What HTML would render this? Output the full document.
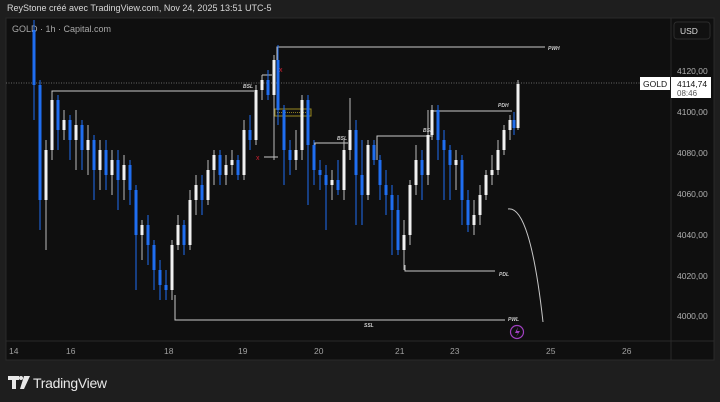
<!DOCTYPE html>
<html><head><meta charset="utf-8"><style>
html,body{margin:0;padding:0;background:#1e1e1e;width:720px;height:402px;overflow:hidden;font-family:"Liberation Sans",sans-serif}
.hdr{position:absolute;left:7px;top:3px;font-size:9px;color:#d8d8d8}
</style></head><body>
<div class="hdr">ReyStone créé avec TradingView.com, Nov 24, 2025 13:51 UTC-5</div>
<svg width="720" height="402" style="position:absolute;left:0;top:0">
<rect x="6" y="18" width="708" height="342" fill="#0f0f0f" stroke="#2a2a2a"/>
<line x1="671" y1="18" x2="671" y2="360" stroke="#2a2a2a"/>
<line x1="6" y1="341" x2="714" y2="341" stroke="#2a2a2a"/>
<text x="12" y="32" font-size="9" fill="#a8a8a8">GOLD · 1h · Capital.com</text>
<rect x="674" y="22" width="36" height="17" rx="3" fill="#111" stroke="#2c2c2c"/>
<text x="680" y="34" font-size="8.5" fill="#ddd">USD</text>
<g font-size="8.5" fill="#b0b0b0">
<text x="677" y="74">4120,00</text><text x="677" y="115">4100,00</text><text x="677" y="156">4080,00</text><text x="677" y="197">4060,00</text><text x="677" y="238">4040,00</text><text x="677" y="279">4020,00</text><text x="677" y="319">4000,00</text>
</g>
<g font-size="8.5" fill="#a0a0a0">
<text x="9" y="354">14</text><text x="66" y="354">16</text><text x="164" y="354">18</text><text x="238" y="354">19</text><text x="314" y="354">20</text><text x="395" y="354">21</text><text x="450" y="354">23</text><text x="546" y="354">25</text><text x="622" y="354">26</text>
</g>
<line x1="6" y1="83" x2="671" y2="83" stroke="#666" stroke-dasharray="1,1.5"/>
<rect x="640" y="77" width="30" height="13" fill="#fff"/>
<text x="643" y="87" font-size="8.5" fill="#111">GOLD</text>
<rect x="671" y="77" width="40" height="21" fill="#fff"/>
<text x="677" y="87" font-size="8.5" fill="#111">4114,74</text>
<text x="677" y="96" font-size="8" fill="#555">08:46</text>
<g stroke="#c8c8c8" stroke-width="1" fill="none">
<path d="M277,69V47H545"/>
<path d="M52,120V91H254"/>
<path d="M262,75H272"/>
<path d="M175,295V320H505"/>
<path d="M432,118V111H512"/>
<path d="M405,265V271H495"/>
<path d="M315,165V143H348"/>
<path d="M377,160V136H433"/>
<path d="M264,157H278"/>
<path d="M508,209Q530,205 543,322"/>
</g>
<rect x="275" y="109" width="36" height="7" fill="none" stroke="#9a8a20"/>
<line x1="277" y1="112.5" x2="309" y2="112.5" stroke="#8a7a20" stroke-dasharray="1,1"/>
<g font-size="5" font-weight="bold" fill="#ccc" font-style="italic">
<text x="548" y="50">PWH</text><text x="243" y="88">BSL</text><text x="337" y="140">BSL</text><text x="423" y="132">BSL</text><text x="498" y="107">PDH</text><text x="499" y="276">PDL</text><text x="364" y="327">SSL</text><text x="508" y="321">PWL</text>
</g>
<text x="279" y="72" font-size="7" fill="#d02030">x</text>
<text x="256" y="160" font-size="7" fill="#d02030">x</text>
<circle cx="517" cy="332" r="6.5" fill="none" stroke="#a040c0" stroke-width="1.2"/>
<path d="M518,327L515,333H518L516,337L520,331H517Z" fill="#a040c0"/>
<g id="c">
<!-- candles: wick then body -->
<g stroke-width="1">
</g>
</g>
<g>
<path stroke="#1f6ef0" d="M34,20V120M40,80V230M58,95V150M70,115V160M82,120V170M94,135V200M106,140V190M118,150V210M130,160V205M136,185V290M148,215V265M154,240V290M160,260V300M166,270V300M184,220V255M202,175V215M220,150V185M238,155V180M250,115V150M268,70V100M278,45V125M284,105V185M290,140V175M308,95V205M314,140V185M320,160V190M326,165V230M338,160V195M356,120V225M362,140V225M374,140V165M380,155V200M386,170V215M392,185V255M398,195V255M422,150V200M438,105V160M444,130V200M450,145V200M462,155V225M468,190V232M514,112V135"/>
<path stroke="#bbb" d="M46,140V250M52,92V160M64,110V140M76,110V170M88,125V175M100,140V190M112,150V195M124,155V200M142,220V260M172,240V300M178,215V250M190,190V250M196,175V215M208,160V205M214,150V185M226,155V185M232,150V175M244,120V180M256,85V145M262,75V100M274,55V160M296,130V170M302,95V160M332,170V200M344,140V200M350,98V160M368,140V200M404,220V270M410,180V245M416,145V195M428,110V185M432,105V140M456,150V190M474,200V235M480,185V225M486,170V200M492,155V185M498,140V175M504,125V155M510,115V140M518,80V130"/>
<g fill="#1f6ef0">
<rect x="32.5" y="30" width="3" height="55"/><rect x="38.5" y="85" width="3" height="115"/><rect x="56.5" y="100" width="3" height="30"/><rect x="68.5" y="120" width="3" height="20"/><rect x="80.5" y="125" width="3" height="25"/><rect x="92.5" y="140" width="3" height="30"/><rect x="104.5" y="150" width="3" height="25"/><rect x="116.5" y="160" width="3" height="20"/><rect x="128.5" y="165" width="3" height="25"/><rect x="134.5" y="190" width="3" height="45"/><rect x="146.5" y="225" width="3" height="20"/><rect x="152.5" y="245" width="3" height="25"/><rect x="158.5" y="270" width="3" height="15"/><rect x="164.5" y="285" width="3" height="5"/><rect x="182.5" y="225" width="3" height="20"/><rect x="200.5" y="185" width="3" height="15"/><rect x="218.5" y="155" width="3" height="20"/><rect x="236.5" y="160" width="3" height="15"/><rect x="248.5" y="130" width="3" height="10"/><rect x="266.5" y="80" width="3" height="15"/><rect x="276.5" y="60" width="3" height="50"/><rect x="282.5" y="110" width="3" height="40"/><rect x="288.5" y="150" width="3" height="10"/><rect x="306.5" y="100" width="3" height="45"/><rect x="312.5" y="145" width="3" height="25"/><rect x="318.5" y="170" width="3" height="5"/><rect x="324.5" y="175" width="3" height="10"/><rect x="336.5" y="180" width="3" height="10"/><rect x="354.5" y="130" width="3" height="45"/><rect x="360.5" y="175" width="3" height="20"/><rect x="372.5" y="145" width="3" height="15"/><rect x="378.5" y="160" width="3" height="25"/><rect x="384.5" y="185" width="3" height="10"/><rect x="390.5" y="195" width="3" height="15"/><rect x="396.5" y="210" width="3" height="40"/><rect x="420.5" y="160" width="3" height="15"/><rect x="436.5" y="110" width="3" height="30"/><rect x="442.5" y="140" width="3" height="10"/><rect x="448.5" y="150" width="3" height="15"/><rect x="460.5" y="160" width="3" height="40"/><rect x="466.5" y="200" width="3" height="25"/><rect x="512.5" y="120" width="3" height="8"/>
</g>
<g fill="#f0f0f0">
<rect x="44.5" y="150" width="3" height="50"/><rect x="50.5" y="100" width="3" height="50"/><rect x="62.5" y="120" width="3" height="10"/><rect x="74.5" y="125" width="3" height="15"/><rect x="86.5" y="140" width="3" height="10"/><rect x="98.5" y="150" width="3" height="20"/><rect x="110.5" y="160" width="3" height="15"/><rect x="122.5" y="165" width="3" height="15"/><rect x="140.5" y="225" width="3" height="10"/><rect x="170.5" y="245" width="3" height="45"/><rect x="176.5" y="225" width="3" height="20"/><rect x="188.5" y="200" width="3" height="45"/><rect x="194.5" y="185" width="3" height="15"/><rect x="206.5" y="170" width="3" height="30"/><rect x="212.5" y="155" width="3" height="15"/><rect x="224.5" y="165" width="3" height="10"/><rect x="230.5" y="160" width="3" height="5"/><rect x="242.5" y="130" width="3" height="45"/><rect x="254.5" y="90" width="3" height="50"/><rect x="260.5" y="80" width="3" height="10"/><rect x="272.5" y="60" width="3" height="35"/><rect x="294.5" y="150" width="3" height="10"/><rect x="300.5" y="100" width="3" height="50"/><rect x="330.5" y="180" width="3" height="5"/><rect x="342.5" y="150" width="3" height="40"/><rect x="348.5" y="130" width="3" height="20"/><rect x="366.5" y="145" width="3" height="50"/><rect x="402.5" y="235" width="3" height="15"/><rect x="408.5" y="185" width="3" height="50"/><rect x="414.5" y="160" width="3" height="25"/><rect x="426.5" y="135" width="3" height="40"/><rect x="430.5" y="110" width="3" height="25"/><rect x="454.5" y="160" width="3" height="5"/><rect x="472.5" y="215" width="3" height="10"/><rect x="478.5" y="195" width="3" height="20"/><rect x="484.5" y="175" width="3" height="20"/><rect x="490.5" y="170" width="3" height="5"/><rect x="496.5" y="150" width="3" height="20"/><rect x="502.5" y="130" width="3" height="20"/><rect x="508.5" y="120" width="3" height="10"/><rect x="516.5" y="84" width="3" height="44"/>
</g>
</g>
<g fill="#e8e8e8">
<path d="M8,376H19V380H16V389H12V380H8Z"/>
<circle cx="21" cy="378" r="2"/>
<path d="M24,376H30L24,389H20Z"/>
</g>
<text x="33" y="388" font-size="14" fill="#e8e8e8" letter-spacing="-0.3">TradingView</text>
</svg>
</body></html>
